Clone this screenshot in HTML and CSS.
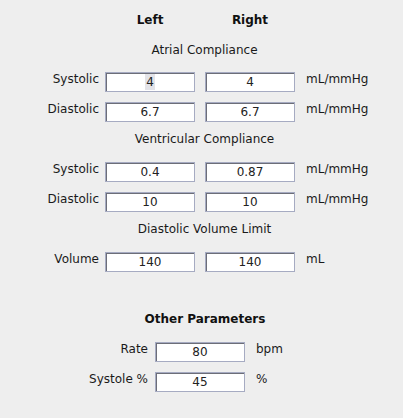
FILE: index.html
```html
<!DOCTYPE html>
<html>
<head>
<meta charset="utf-8">
<link rel="stylesheet" href="styles.css">
</head>
<body>
<div class="panel">
  <div class="row head">
    <span></span>
    <span class="col-title">Left</span>
    <span class="col-title right">Right</span>
  </div>

  <div class="section-title first">Atrial Compliance</div>
  <div class="row">
    <span class="label">Systolic</span>
    <div class="field"><span class="sel">4</span></div>
    <div class="field right">4</div>
    <span class="unit">mL/mmHg</span>
  </div>
  <div class="row">
    <span class="label">Diastolic</span>
    <div class="field">6.7</div>
    <div class="field right">6.7</div>
    <span class="unit">mL/mmHg</span>
  </div>

  <div class="section-title">Ventricular Compliance</div>
  <div class="row">
    <span class="label">Systolic</span>
    <div class="field">0.4</div>
    <div class="field right">0.87</div>
    <span class="unit">mL/mmHg</span>
  </div>
  <div class="row">
    <span class="label">Diastolic</span>
    <div class="field">10</div>
    <div class="field right">10</div>
    <span class="unit">mL/mmHg</span>
  </div>

  <div class="section-title">Diastolic Volume Limit</div>
  <div class="row">
    <span class="label">Volume</span>
    <div class="field">140</div>
    <div class="field right">140</div>
    <span class="unit">mL</span>
  </div>
</div>

<div class="other">
  <div class="other-title">Other Parameters</div>
  <div class="orow">
    <span class="label">Rate</span>
    <div class="field">80</div>
    <span class="unit">bpm</span>
  </div>
  <div class="orow">
    <span class="label">Systole %</span>
    <div class="field">45</div>
    <span class="unit">%</span>
  </div>
</div>
</body>
</html>
```

FILE: styles.css
```css
html, body {
  margin: 0;
  padding: 0;
  background: #eeeeee;
}

body {
  width: 403px;
  height: 418px;
  font-family: "DejaVu Sans", sans-serif;
  font-size: 12px;
  color: #1a1a1a;
  overflow: hidden;
}

.panel {
  padding-top: 10px;
}

.row {
  display: grid;
  grid-template-columns: 105px 90px 100px auto;
  margin-bottom: 10px;
}

.row .right {
  margin-left: 10px;
}

.row.head {
  height: 20px;
  line-height: 20px;
  margin-bottom: 0;
}

.col-title {
  font-weight: bold;
  text-align: center;
  color: #111;
}

.section-title {
  height: 20px;
  line-height: 20px;
  margin: -3px 0 13px 0;
  padding-left: 105px;
  width: 190px;
  text-align: center;
  text-indent: 9px;
}

.section-title.first {
  margin-top: 10px;
  margin-bottom: 12px;
}

.label {
  line-height: 14px;
  text-align: right;
  padding-right: 6px;
  align-self: start;
  white-space: nowrap;
}

.unit {
  line-height: 14px;
  padding-left: 11px;
  align-self: start;
  white-space: nowrap;
}

.field {
  box-sizing: border-box;
  height: 20px;
  border: 1px solid #a6abc2;
  box-shadow: inset 1px 1px 0 #6c6e78;
  background: #ffffff;
  line-height: 18px;
  text-align: center;
  color: #222;
}

.sel {
  background: #e3e3e8;
  padding: 1px 1px 1px 1px;
}

.other {
  padding-top: 27px;
}

.other-title {
  height: 20px;
  line-height: 20px;
  font-weight: bold;
  text-align: center;
  padding-left: 7px;
  color: #111;
  margin-bottom: 13px;
}

.orow {
  display: grid;
  grid-template-columns: 155px 90px auto;
  margin-bottom: 10px;
}

.orow .label {
  padding-right: 7px;
}
```
